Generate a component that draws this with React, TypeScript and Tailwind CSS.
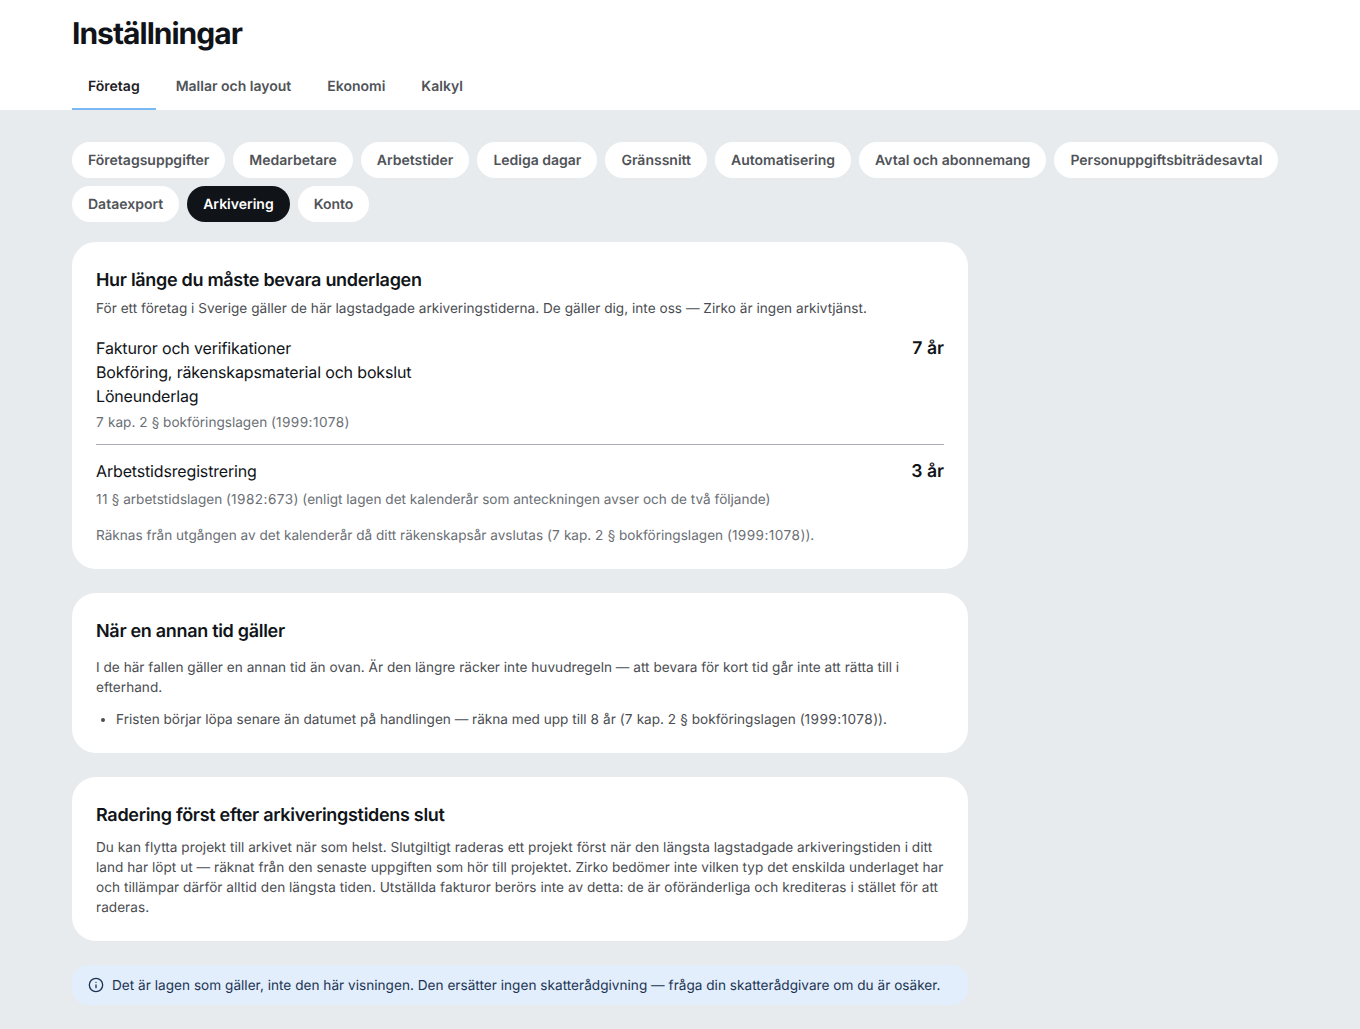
const font = { fontFamily: 'Inter, sans-serif' };

const tabs = ['Företag', 'Mallar och layout', 'Ekonomi', 'Kalkyl'];
const pills = ['Företagsuppgifter', 'Medarbetare', 'Arbetstider', 'Lediga dagar', 'Gränssnitt', 'Automatisering', 'Avtal och abonnemang', 'Personuppgiftsbiträdesavtal', 'Dataexport', 'Arkivering', 'Konto'];

function Card({ children }: { children: React.ReactNode }) {
  return <section className="w-[896px] rounded-3xl bg-white px-6 pt-6 pb-[23px]">{children}</section>;
}

function N({ children }: { children: React.ReactNode }) {
  return <span className="tracking-[0.45px]">{children}</span>;
}

export default function App() {
  return (
    <div className="min-h-[1029px] bg-[#e8ebee] font-['Inter',sans-serif] text-[#101418] [text-rendering:geometricPrecision] antialiased" style={font}>
      <header className="bg-white px-[72px] pt-4">
        <h1 className="h-9 text-[30px] leading-9 font-bold tracking-[-0.033em] text-[#101418]">Inställningar</h1>
        <nav className="mt-[4px] flex h-[54px] items-stretch">
          {tabs.map((t, i) => (
            <div key={t} className={`mr-1 flex items-center border-b-2 px-4 pt-[10px] text-sm font-semibold ${i === 0 ? 'border-[#7ab8f5] text-[#1d2126]' : 'border-transparent text-[#505358]'}`}>{t}</div>
          ))}
        </nav>
      </header>
      <main className="px-[72px] pt-8 pb-6">
        <div className="flex w-[1216px] flex-wrap gap-2">
          {pills.map((p) => (
            <div key={p} className={`flex h-9 items-center rounded-full px-4 pt-[2px] text-sm font-semibold ${p === 'Arkivering' ? 'bg-[#101418] text-white' : 'bg-white text-[#505358]'}`}>{p}</div>
          ))}
        </div>
        <div className="mt-5 flex flex-col gap-6">
          <Card>
            <h2 className="mt-px text-lg leading-7 font-semibold tracking-[-0.017em]">Hur länge du måste bevara underlagen</h2>
            <p className="mt-1 text-[13.6px] leading-5 tracking-[0.02px] text-[#4a4d52]">För ett företag i Sverige gäller de här lagstadgade arkiveringstiderna. De gäller dig, inte oss — Zirko är ingen arkivtjänst.</p>
            <div className="mt-[17px] flex justify-between">
              <div className="text-base leading-6 tracking-[-0.01em]">
                <div>Fakturor och verifikationer</div>
                <div>Bokföring, räkenskapsmaterial och bokslut</div>
                <div>Löneunderlag</div>
              </div>
              <div className="h-6 pt-px text-[17.6px] leading-6 font-semibold">7 år</div>
            </div>
            <p className="mt-[5px] text-[13.6px] leading-5 text-[#6b6f75]"><N>7</N> kap. <N>2</N> § bokföringslagen (<N>1999:1078</N>)</p>
            <div className="mt-[11px] border-t border-[#a9adb3]" />
            <div className="mt-[14px] flex justify-between">
              <div className="text-base leading-6 tracking-[-0.01em]">Arbetstidsregistrering</div>
              <div className="h-6 pt-px text-[17.6px] leading-6 font-semibold">3 år</div>
            </div>
            <p className="mt-[7px] text-[13.6px] leading-5 text-[#6b6f75]"><N>11</N> § arbetstidslagen (<N>1982:673</N>) (enligt lagen det kalenderår som anteckningen avser och de två följande)</p>
            <p className="mt-4 text-[13.6px] leading-5 text-[#6b6f75]">Räknas från utgången av det kalenderår då ditt räkenskapsår avslutas (<N>7</N> kap. <N>2</N> § bokföringslagen (<N>1999:1078</N>)).</p>
          </Card>
          <Card>
            <h2 className="mt-px text-lg leading-7 font-semibold tracking-[-0.017em]">När en annan tid gäller</h2>
            <p className="mt-3 text-[13.6px] leading-5 tracking-[0.02px] text-[#4a4d52]">I de här fallen gäller en annan tid än ovan. Är den längre räcker inte huvudregeln — att bevara för kort tid går inte att rätta till i efterhand.</p>
            <ul className="mt-3 list-disc pl-5 text-[13.6px] leading-5 text-[#4a4d52]">
              <li>Fristen börjar löpa senare än datumet på handlingen — räkna med upp till <N>8</N> år (<N>7</N> kap. <N>2</N> § bokföringslagen (<N>1999:1078</N>)).</li>
            </ul>
          </Card>
          <Card>
            <h2 className="mt-px text-lg leading-7 font-semibold tracking-[-0.017em]">Radering först efter arkiveringstidens slut</h2>
            <p className="mt-2 text-[13.6px] leading-5 tracking-[0.03px] text-[#4a4d52]">Du kan flytta projekt till arkivet när som helst. Slutgiltigt raderas ett projekt först när den längsta lagstadgade arkiveringstiden i ditt land har löpt ut — räknat från den senaste uppgiften som hör till projektet. Zirko bedömer inte vilken typ det enskilda underlaget har och tillämpar därför alltid den längsta tiden. Utställda fakturor berörs inte av detta: de är oföränderliga och krediteras i stället för att raderas.</p>
          </Card>
          <div className="flex h-10 w-[896px] items-center gap-2 rounded-2xl bg-[#e2eefb] px-4 text-[13.6px] tracking-[0.02px] text-[#1c3454]">
            <svg width="16" height="16" viewBox="0 0 24 24" fill="none" stroke="currentColor" strokeWidth="2" strokeLinecap="round" strokeLinejoin="round" className="shrink-0">
              <circle cx="12" cy="12" r="10" /><path d="M12 16v-4" /><path d="M12 8h.01" />
            </svg>
            <span className="pt-[2px]">Det är lagen som gäller, inte den här visningen. Den ersätter ingen skatterådgivning — fråga din skatterådgivare om du är osäker.</span>
          </div>
        </div>
      </main>
    </div>
  );
}
